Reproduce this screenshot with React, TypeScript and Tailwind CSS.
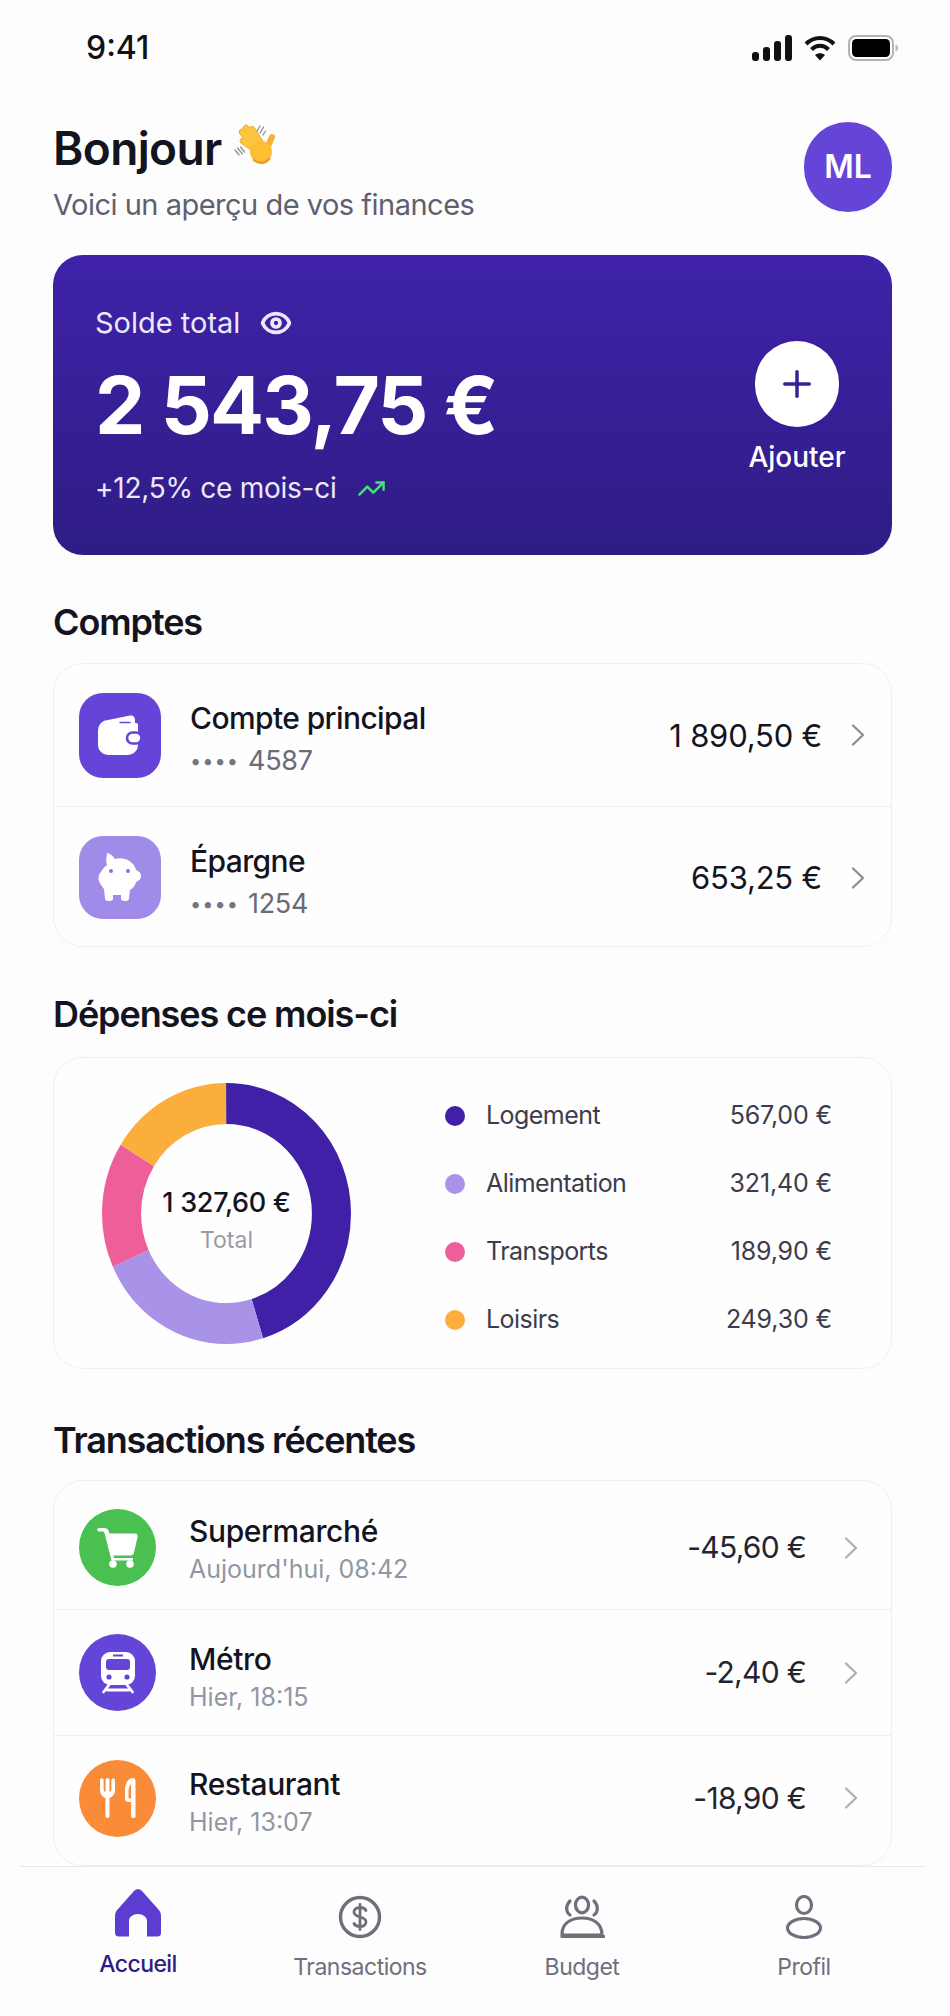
import React from "react";
import { Eye, Plus, TrendingUp } from "lucide-react";

const Chevron = ({ tone = "#8e8e9a" }: { tone?: string }) => (
  <svg viewBox="0 0 16 24" className="w-[16px] h-[24px] shrink-0" fill="none" stroke={tone} strokeWidth="2.4" strokeLinecap="round" strokeLinejoin="round">
    <path d="M3 2.500 13 12 3 21.500" />
  </svg>
);

const WaveHand = () => {
  const fingers = ["M33 34 18 23", "M33 32 17 14", "M35 30 21 10", "M38 29 27 11"];
  return (
    <svg viewBox="0 0 60 50" className="w-[60px] h-[50px] mb-[10px] shrink-0" fill="none" strokeLinecap="round">
      <path d="M32 13l3-5M35 15l3.500-6M38 17l2.500-4" stroke="#8f8f98" strokeWidth="1.300" />
      <path d="M10 32l4 5M12.500 30l5 6M15.500 29l4 5" stroke="#8f8f98" strokeWidth="1.300" />
      {fingers.map((d) => (
        <path key={d} d={d} stroke="#e9a528" strokeWidth="6.400" />
      ))}
      {fingers.map((d) => (
        <path key={d + "x"} d={d} stroke="#fcc63f" strokeWidth="5" />
      ))}
      <path d="M41 33l6-14" stroke="#f5b331" strokeWidth="6" />
      <circle cx="36" cy="34" r="11" fill="#fbbe35" />
      <path d="M29 42c4 4 11 4 15-1" stroke="#ed9a20" strokeWidth="2.400" />
    </svg>
  );
};

const WalletIcon = () => (
  <svg viewBox="0 0 45 40" className="w-[45px] h-[40px]">
    <path d="M10 5 32 .6C35 0 37 2 37 5v3h1a2 2 0 0 1 2 2v20a10 10 0 0 1-10 10H10A10 10 0 0 1 0 30V15A10 10 0 0 1 10 5Z" fill="#fff" />
    <path d="M22 7.500h10" stroke="#6544d8" strokeWidth="1.400" strokeLinecap="round" />
    <rect x="29" y="17.500" width="14.500" height="11" rx="5.500" fill="#fff" stroke="#6544d8" strokeWidth="2.600" />
  </svg>
);

const PiggyIcon = () => (
  <svg viewBox="0 0 44 50" className="w-[44px] h-[50px]">
    <path d="M9 0c3 .5 6 3 8 6 3-1 7-1 10 0 6 2 10 6 11 11 3 1 5 3 5 6s-2 5-5 6c-1 4-3 6-6 8l-1 8c0 2-1 3-3 3h-2c-2 0-3-1-3-3v-3h-8v3c0 2-1 3-3 3H10c-2 0-3-1-3-3l-1-9c-2-2-3-4-4-6-2-2-2-9 1-11 1-2 3-5 6-7-1-3-1-7 0-11Z" fill="#fff" />
    <circle cx="13" cy="18" r="2" fill="#8672d6" />
    <circle cx="30" cy="18" r="2" fill="#8672d6" />
  </svg>
);

const CartIcon = () => (
  <svg viewBox="0 0 42 40" className="w-[42px] h-[40px]">
    <path d="M2 0h5c2.500 0 4 1 4.700 3l.6 2.500H38c2 0 3 1.500 2.600 3.400l-3.600 15.600c-.4 1.800-1.700 3-3.600 3H16.500L17 30h19v2.500H14.500L7.500 5C7 3.800 6.500 3.500 5.500 3.500H2A1.750 1.750 0 0 1 2 0Z" fill="#fff" />
    <circle cx="16" cy="36" r="3.800" fill="#fff" />
    <circle cx="33" cy="36" r="3.800" fill="#fff" />
  </svg>
);

const TrainIcon = () => (
  <svg viewBox="0 0 36 42" className="w-[36px] h-[42px]">
    <rect x="1" y="0" width="34" height="33" rx="9" fill="#fff" />
    <rect x="13" y="2.500" width="10" height="2" fill="#6544d8" />
    <rect x="6" y="7" width="24" height="11" rx="3" fill="#6544d8" />
    <circle cx="9" cy="25" r="2.600" fill="#6544d8" />
    <circle cx="27" cy="25" r="2.600" fill="#6544d8" />
    <path d="M9 33 3.500 40M27 33l5.500 7M7 38h22" stroke="#fff" strokeWidth="2.800" strokeLinecap="round" fill="none" />
  </svg>
);

const CutleryIcon = () => (
  <svg viewBox="0 0 36 40" className="w-[36px] h-[40px]" fill="#fff">
    <path d="M0 2a1.800 1.800 0 0 1 3.600 0v9c0 1.500.8 2.500 2 3V2a1.900 1.900 0 0 1 3.800 0v12c1.200-.5 2-1.500 2-3V2a1.800 1.800 0 0 1 3.600 0v10c0 4-2.500 7-5.500 8v18a2 2 0 0 1-4 0V20C2.500 19 0 16 0 12Z" />
    <path d="M32.500 0c1.800 0 3 1 3 3v35a2.200 2.200 0 0 1-4.400 0V24h-3c-2 0-3.100-1-3.100-3V12c0-7 3.500-12 7.500-12Zm-1.500 6c-1.500 2-2.500 4-2.500 7v6c0 1 .5 1.500 1.500 1.500h1Z" fillRule="evenodd" />
  </svg>
);

const HomeIcon = () => (
  <svg viewBox="0 0 48 48" className="w-[48px] h-[48px]">
    <path d="M20 2 4 20c-2 2-3 4-3 7v17c0 2 1.500 3.500 3.500 3.500H15V32c0-4 4-7 9-7s9 3 9 7v15.500h10.500c2 0 3.500-1.500 3.500-3.500V27c0-3-1-5-3-7L28 2c-2-2.500-6-2.500-8 0Z" fill="#5d3dcf" />
  </svg>
);

const DollarIcon = () => (
  <svg viewBox="0 0 44 44" className="w-[44px] h-[44px]" fill="none" stroke="#6f6f7c" strokeWidth="3.400" strokeLinecap="round" strokeLinejoin="round">
    <circle cx="22" cy="22" r="19.500" />
    <path d="M28 15.500c-1-2-3-3-6-3-3.500 0-6 1.800-6 4.500s2.300 4 6 5 6 2.300 6 5-2.500 4.500-6 4.500c-3 0-5-1-6-3M22 9.500v25" strokeWidth="2.800" />
  </svg>
);

const BudgetIcon = () => (
  <svg viewBox="0 0 46 44" className="w-[46px] h-[44px]" fill="none" stroke="#6f6f7c" strokeWidth="3.200" strokeLinecap="round" strokeLinejoin="round">
    <ellipse cx="23" cy="10" rx="6.500" ry="7.800" />
    <path d="M11 6c-3 3-4 6-3 10 .4 2 1.500 3 3 4M35 6c3 3 4 6 3 10-.4 2-1.500 3-3 4" />
    <path d="M3 40c-.5-11 8-17 20-17s20 6 20 17Z" />
    <path d="M3 41.500h42" />
  </svg>
);

const ProfileIcon = () => (
  <svg viewBox="0 0 40 44" className="w-[40px] h-[44px]" fill="none" stroke="#6f6f7c" strokeWidth="3.200">
    <ellipse cx="20" cy="10" rx="7.500" ry="8.500" />
    <ellipse cx="20" cy="33" rx="16.500" ry="9.500" />
  </svg>
);

const Donut = () => {
  const segments = [
    { color: "#3f20a6", start: 0, end: 163 },
    { color: "#a893e8", start: 163, end: 246 },
    { color: "#ee5f9a", start: 246, end: 302 },
    { color: "#fbae3c", start: 302, end: 360 },
  ];
  return (
    <svg viewBox="0 0 100 100" preserveAspectRatio="none" className="w-[249px] h-[261px] shrink-0">
      {segments.map((s) => (
        <circle
          key={s.color}
          cx="50"
          cy="50"
          r="42.150"
          fill="none"
          stroke={s.color}
          strokeWidth="15.700"
          pathLength={360}
          strokeDasharray={`${s.end - s.start} ${360 - (s.end - s.start)}`}
          strokeDashoffset={-s.start}
          transform="rotate(-90 50 50)"
        />
      ))}
    </svg>
  );
};

const accounts = [
  { name: "Compte principal", last: "4587", amount: "1 890,50 €", bg: "bg-[#6544d8]", icon: <WalletIcon />, h: "h-[85px]" },
  { name: "Épargne", last: "1254", amount: "653,25 €", bg: "bg-[#a08be8]", icon: <PiggyIcon />, h: "h-[83px]" },
];

const legend = [
  { label: "Logement", value: "567,00 €", dot: "bg-[#3f20a6]" },
  { label: "Alimentation", value: "321,40 €", dot: "bg-[#a893e8]" },
  { label: "Transports", value: "189,90 €", dot: "bg-[#ee5f9a]" },
  { label: "Loisirs", value: "249,30 €", dot: "bg-[#fbae3c]" },
];

const transactions = [
  { name: "Supermarché", when: "Aujourd'hui, 08:42", amount: "-45,60 €", bg: "bg-[#49c04f]", icon: <CartIcon />, row: "h-[128px] pt-[5px]", text: "pt-[2px]" },
  { name: "Métro", when: "Hier, 18:15", amount: "-2,40 €", bg: "bg-[#6544d8]", icon: <TrainIcon />, row: "h-[126px]", text: "pt-[8px]" },
  { name: "Restaurant", when: "Hier, 13:07", amount: "-18,90 €", bg: "bg-[#f98b39]", icon: <CutleryIcon />, row: "h-[131px] pb-[6px]", text: "pt-[6px]" },
];

const App = () => {
  return (
    <div className="w-[950px] h-[2016px] overflow-hidden bg-[#fdfdfe] font-['Inter',sans-serif] text-[#14141f]">
      {/* Barre de statut */}
      <div className="h-[96px] pl-[86px] pr-[52px] flex items-center justify-between">
        <span className="text-[32px] font-medium leading-none text-[#111]">9:41</span>
        <div className="flex items-center gap-[12px]">
          <svg viewBox="0 0 40 26" className="w-[40px] h-[26px]" fill="#111">
            <rect x="0" y="17" width="7" height="9" rx="3" />
            <rect x="11" y="12" width="7" height="14" rx="3" />
            <rect x="22" y="6" width="7" height="20" rx="3" />
            <rect x="33" y="0" width="7" height="26" rx="3" />
          </svg>
          <svg viewBox="0 0 32 26" className="w-[32px] h-[26px]" fill="none" stroke="#111" strokeWidth="4">
            <path d="M2 9c8-8 20-8 28 0" />
            <path d="M7.500 14.500c5-5 12-5 17 0" />
            <path d="M16 25.500 11 20c3-2.500 7-2.500 10 0Z" fill="#111" stroke="none" />
          </svg>
          <svg viewBox="0 0 50 26" className="w-[50px] h-[26px]">
            <rect x="1" y="1" width="44" height="24" rx="7" fill="none" stroke="#b4b4b8" strokeWidth="2" />
            <rect x="4" y="4" width="38" height="18" rx="4.500" fill="#000" />
            <path d="M47.500 9.500c1.500.5 2.500 2 2.500 3.500s-1 3-2.500 3.500Z" fill="#b4b4b8" />
          </svg>
        </div>
      </div>

      <main className="pl-[53px] pr-[58px]">
        {/* En-tête */}
        <header className="h-[159px] pt-[26px] flex items-start justify-between">
          <div>
            <div className="flex items-center gap-[3px] h-[52px]">
              <h1 className="text-[46px] font-semibold leading-[50px] tracking-[-0.6px]">Bonjour</h1>
              <WaveHand />
            </div>
            <p className="mt-[13px] text-[29px] leading-[36px] tracking-[-0.5px] text-[#5f5f70]">Voici un aperçu de vos finances</p>
          </div>
          <div className="w-[88px] h-[90px] rounded-full bg-[#6544d8] text-white text-[32px] font-semibold flex items-center justify-center">
            ML
          </div>
        </header>

        {/* Solde */}
        <section className="h-[300px] rounded-[30px] bg-linear-to-b from-[#3f22a9] to-[#2f1c85] pl-[42px] pr-[45px] flex justify-between text-white">
          <div className="pt-[50px]">
            <div className="h-[36px] flex items-center gap-[20px] text-[29px] text-[#ebe8f8]">
              Solde total
              <Eye size={32} strokeWidth={2.800} />
            </div>
            <div className="mt-[24px] h-[80px] flex items-center text-[80px] font-bold leading-none tracking-[-1.8px]">2 543,75 €</div>
            <div className="mt-[25px] h-[36px] flex items-center gap-[20px] text-[28px] tracking-[-0.25px] text-[#ebe8f8]">
              +12,5% ce mois-ci
              <TrendingUp size={29} strokeWidth={2} className="text-[#4ade80]" />
            </div>
          </div>
          <div className="w-[100px] pt-[86px] flex flex-col items-center">
            <div className="w-[84px] h-[86px] rounded-full bg-white flex items-center justify-center">
              <Plus size={42} strokeWidth={2} className="text-[#37209a]" />
            </div>
            <span className="mt-[12px] text-[28px] font-medium leading-[36px] whitespace-nowrap">Ajouter</span>
          </div>
        </section>

        {/* Comptes */}
        <h2 className="mt-[45px] mb-[19px] text-[36px] font-semibold leading-[44px] tracking-[-1.1px]">Comptes</h2>
        <section className="h-[284px] rounded-[30px] border border-[#f0f0f3] bg-[#fefefe]">
          {accounts.map((a, i) => (
            <div key={a.name} className={`h-[142px] pl-[25px] pr-[25px] flex items-center ${i > 0 ? "border-t border-[#f0f0f3]" : ""}`}>
              <div className={`w-[82px] ${a.h} rounded-[24px] ${a.bg} flex items-center justify-center shrink-0`}>{a.icon}</div>
              <div className="ml-[29px] pt-[6px] flex-1">
                <p className="text-[30px] font-medium leading-[38px] tracking-[-0.6px]">{a.name}</p>
                <p className="mt-[8px] flex items-center gap-[9px] text-[27px] leading-[32px] tracking-[-0.3px] text-[#6b6b78]">
                  <span className="text-[20px] tracking-[1px] text-[#75757f]">••••</span>
                  {a.last}
                </p>
              </div>
              <span className="mr-[28px] pt-[2px] text-[31px] font-normal tracking-[-0.2px]">{a.amount}</span>
              <Chevron />
            </div>
          ))}
        </section>

        {/* Dépenses */}
        <h2 className="mt-[45px] mb-[21px] text-[36px] font-semibold leading-[44px] tracking-[-1.1px]">Dépenses ce mois-ci</h2>
        <section className="h-[312px] rounded-[30px] border border-[#f0f0f3] bg-[#fefefe] pl-[48px] pr-[59px] flex items-center">
          <div className="relative shrink-0">
            <Donut />
            <div className="absolute inset-0 pt-[14px] flex flex-col items-center justify-center">
              <span className="text-[27px] font-medium leading-[34px] tracking-[-0.3px] whitespace-nowrap">1 327,60 €</span>
              <span className="mt-[5px] text-[23px] leading-[30px] text-[#9a9aa6]">Total</span>
            </div>
          </div>
          <ul className="ml-[94px] mt-[9px] flex-1 flex flex-col gap-[34px]">
            {legend.map((l) => (
              <li key={l.label} className="h-[34px] flex items-center text-[25px] text-[#3c3c4c]">
                <span className={`w-[20px] h-[20px] rounded-full ${l.dot}`} />
                <span className="ml-[21px] flex-1 tracking-[-0.55px]">{l.label}</span>
                <span className="tracking-[-0.15px]">{l.value}</span>
              </li>
            ))}
          </ul>
        </section>

        {/* Transactions */}
        <h2 className="mt-[49px] mb-[18px] text-[36px] font-semibold leading-[44px] tracking-[-1.2px]">Transactions récentes</h2>
        <section className="h-[386px] rounded-[30px] border border-[#f0f0f3] bg-[#fefefe]">
          {transactions.map((t, i) => (
            <div key={t.name} className={`${t.row} pl-[25px] pr-[32px] flex items-center ${i > 0 ? "border-t border-[#f0f0f3]" : ""}`}>
              <div className={`w-[77px] h-[77px] rounded-full ${t.bg} flex items-center justify-center shrink-0`}>{t.icon}</div>
              <div className={`ml-[33px] flex-1 ${t.text}`}>
                <p className="text-[30px] font-medium leading-[38px] tracking-[-0.4px]">{t.name}</p>
                <p className="mt-[3px] text-[25px] leading-[32px] text-[#9097a3]">{t.when}</p>
              </div>
              <span className="mr-[37px] text-[30px] tracking-[-0.7px] text-[#24242f]">{t.amount}</span>
              <Chevron tone="#b0b0ba" />
            </div>
          ))}
        </section>
      </main>

      {/* Navigation */}
      <nav className="ml-[19px] mr-[24px] h-[150px] border-t border-[#e8e8ec] pl-[8px] flex">
        <a className="w-[222px] pt-[19px] flex flex-col items-center">
          <span className="h-[54px] flex items-center justify-center"><HomeIcon /></span>
          <span className="mt-[8px] text-[23px] font-medium leading-[32px] tracking-[-0.6px] text-[#2f1c85]">Accueil</span>
        </a>
        <a className="w-[222px] pt-[19px] flex flex-col items-center">
          <span className="h-[54px] pt-[8px] flex items-center justify-center"><DollarIcon /></span>
          <span className="mt-[11px] text-[23px] leading-[32px] tracking-[-0.5px] text-[#6f6f7c]">Transactions</span>
        </a>
        <a className="w-[222px] pt-[19px] flex flex-col items-center">
          <span className="h-[54px] pt-[8px] flex items-center justify-center"><BudgetIcon /></span>
          <span className="mt-[11px] text-[23px] leading-[32px] tracking-[-0.5px] text-[#6f6f7c]">Budget</span>
        </a>
        <a className="w-[222px] pt-[19px] flex flex-col items-center">
          <span className="h-[54px] pt-[8px] flex items-center justify-center"><ProfileIcon /></span>
          <span className="mt-[11px] text-[23px] leading-[32px] tracking-[-0.5px] text-[#6f6f7c]">Profil</span>
        </a>
      </nav>
    </div>
  );
};

export default App;
